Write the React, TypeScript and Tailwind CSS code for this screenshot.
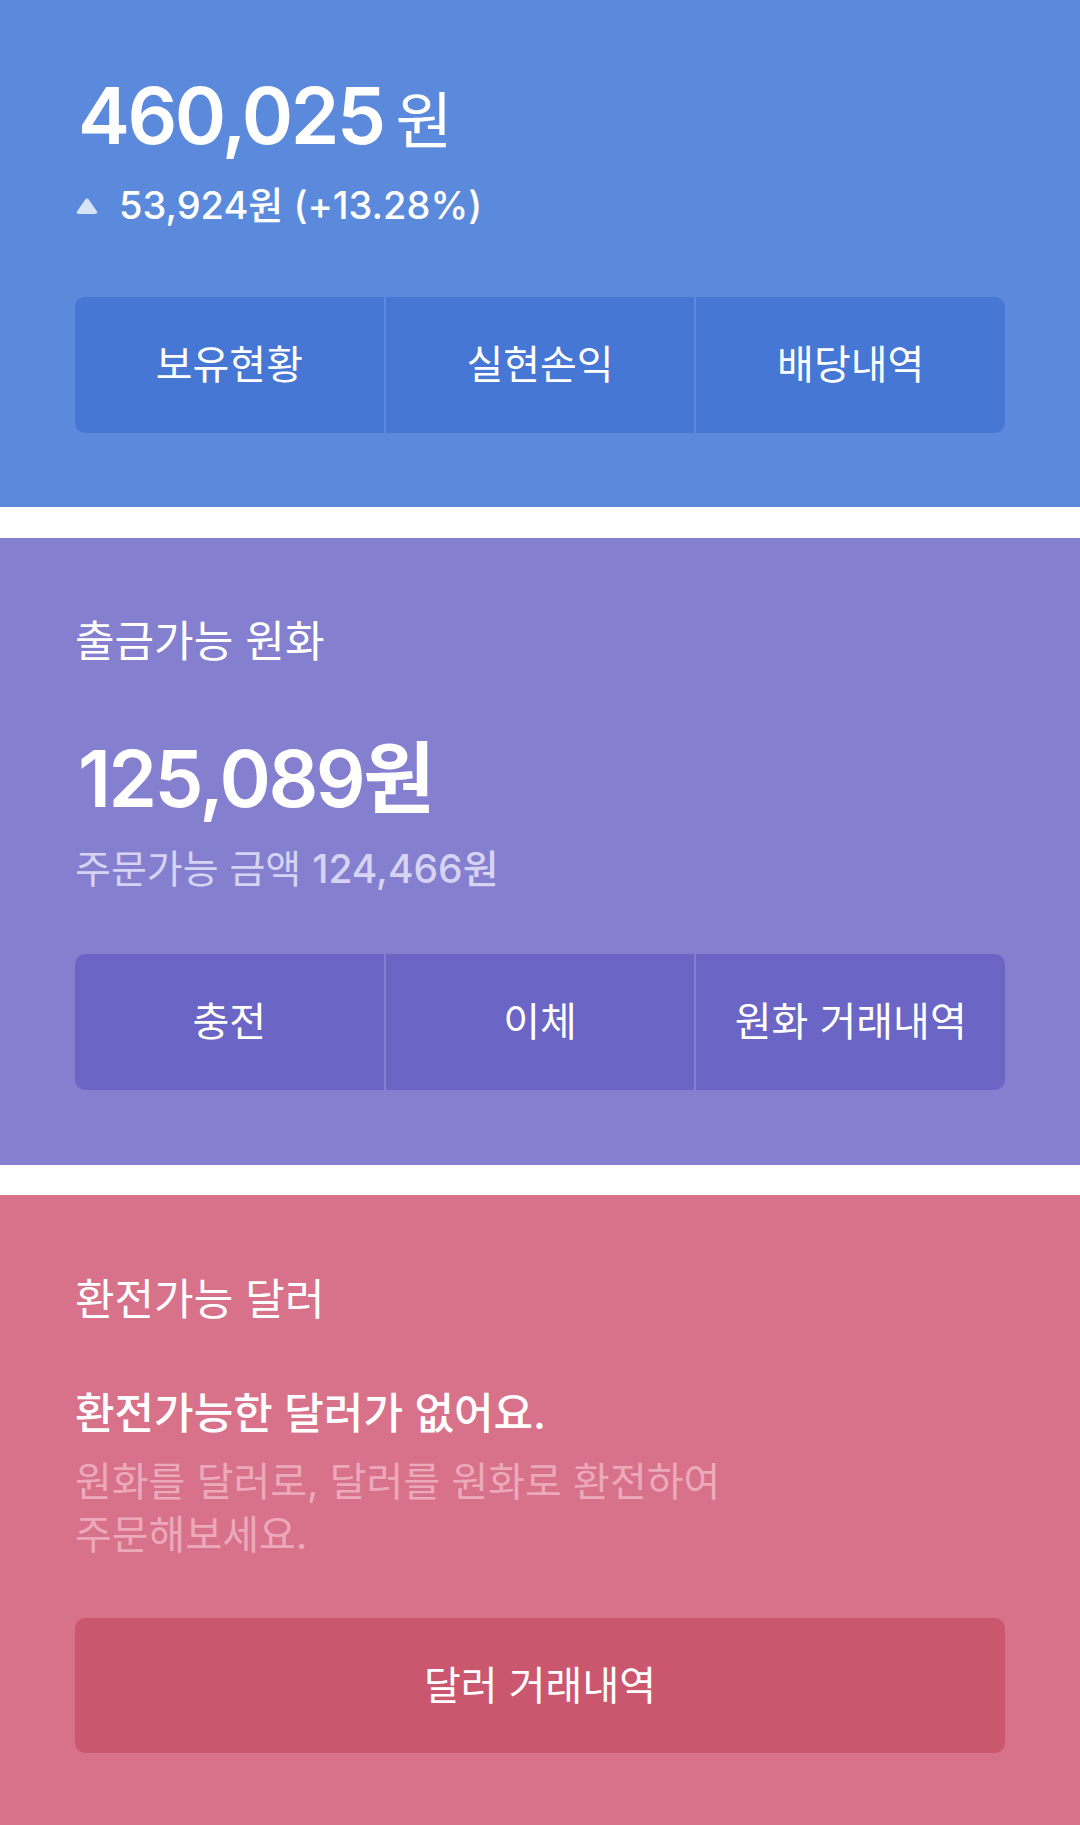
import React from "react";

const font = "font-['Inter','Noto_Sans_CJK_KR',sans-serif]";

const ButtonRow = ({ items, bg }: { items: string[]; bg: string }) => (
  <div className="flex h-[136px] gap-[2px] overflow-hidden rounded-[10px]">
    {items.map((label) => (
      <div key={label} className={`flex flex-1 items-center justify-center text-[40px] leading-none text-white ${bg}`}>
        {label}
      </div>
    ))}
  </div>
);

const App = () => {
  return (
    <div className={`w-[1080px] bg-white ${font}`}>
      {/* 보유 자산 */}
      <section className="bg-[#5b8add] px-[75px] pt-[77px] pb-[74px]">
        <div className="flex h-[78px] items-baseline pl-[3px] text-white">
          <span className="text-[78px] font-semibold leading-[78px] tracking-[-2.5px]">460,025</span>
          <span className="ml-[12px] text-[62px] leading-[62px]">원</span>
        </div>
        <div className="mt-[31px] flex items-center text-white">
          <svg width="22" height="16" viewBox="0 0 22 16" className="ml-[1px]">
            <path d="M9.3 1.6 Q11 -0.6 12.7 1.6 L21 13.4 Q22 16 19 16 L3 16 Q0 16 1 13.4 Z" fill="#d7e3f8" />
          </svg>
          <span className="ml-[21px] text-[38px] font-medium leading-[39px]">53,924원 (+13.28%)</span>
        </div>
        <div className="mt-[72px]">
          <ButtonRow items={["보유현황", "실현손익", "배당내역"]} bg="bg-[#4677d5]" />
        </div>
      </section>

      <div className="h-[31px]" />

      {/* 출금가능 원화 */}
      <section className="bg-[#857fd0] px-[75px] pt-[82px] pb-[75px] text-white">
        <div className="text-[43px] leading-[43px]">출금가능 원화</div>
        <div className="mt-[77px] pl-[3px] text-[78px] font-semibold leading-[78px] tracking-[-2.5px]">
          125,089<span className="tracking-normal">원</span>
        </div>
        <div className="mt-[31px] text-[39px] leading-[39px] text-[#d6d4f2]">
          주문가능 금액 <span className="font-medium">124,466원</span>
        </div>
        <div className="mt-[66px]">
          <ButtonRow items={["충전", "이체", "원화 거래내역"]} bg="bg-[#6b65c6]" />
        </div>
      </section>

      <div className="h-[30px]" />

      {/* 환전가능 달러 */}
      <section className="bg-[#d8718a] px-[75px] pt-[83px] pb-[73px] text-white">
        <div className="text-[43px] leading-[43px]">환전가능 달러</div>
        <div className="mt-[71px] text-[43px] font-medium leading-[43px]">환전가능한 달러가 없어요.</div>
        <div className="mt-[20px] text-[40px] leading-[53px] text-[#eca9ba]">
          원화를 달러로, 달러를 원화로 환전하여
          <br />
          주문해보세요.
        </div>
        <div className="mt-[57px] flex h-[135px] items-center justify-center rounded-[10px] bg-[#cb576f] text-[40px] leading-none">
          달러 거래내역
        </div>
      </section>
    </div>
  );
};

export default App;
